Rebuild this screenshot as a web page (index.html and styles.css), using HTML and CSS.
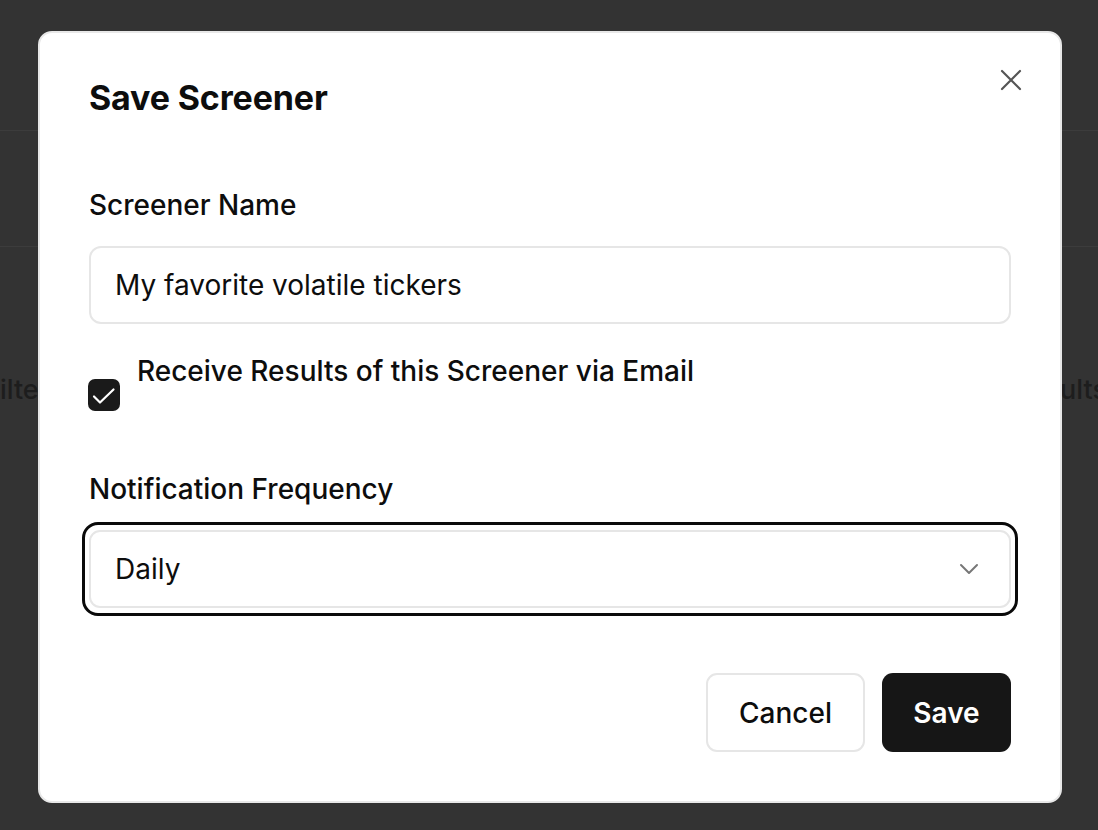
FILE: index.html
```html
<!DOCTYPE html>
<html>
<head>
<meta charset="utf-8">
<link rel="stylesheet" href="styles.css">
</head>
<body>
<div class="page">
  <div class="page-header"></div>
  <div class="page-toolbar"></div>
  <div class="page-row">
    <span class="page-left">Filters</span>
    <span class="page-right">Results</span>
  </div>
</div>
<div class="overlay">
  <div class="modal">
    <div class="modal-head">
      <h2 class="modal-title">Save Screener</h2>
      <button class="close-btn" aria-label="Close">
        <svg width="22" height="22" viewBox="0 0 22 22"><path d="M2 2 L20 20 M20 2 L2 20" stroke="#555" stroke-width="2.2" stroke-linecap="round" fill="none"/></svg>
      </button>
    </div>
    <label class="field-label name-label">Screener Name</label>
    <div class="text-input">My favorite volatile tickers</div>
    <div class="check-row">
      <span class="checkbox">
        <svg width="32" height="32" viewBox="0 0 32 32"><path d="M6 17.5 L12 23.5 L25.5 10.5" stroke="#fff" stroke-width="2.2" stroke-linecap="round" stroke-linejoin="round" fill="none"/></svg>
      </span>
      <span class="check-label">Receive Results of this Screener via Email</span>
    </div>
    <label class="field-label freq-label">Notification Frequency</label>
    <div class="select-ring">
      <div class="select">
        <span>Daily</span>
        <svg width="20" height="12" viewBox="0 0 20 12"><path d="M2 2 L10 10 L18 2" stroke="#777" stroke-width="2" stroke-linecap="round" stroke-linejoin="round" fill="none"/></svg>
      </div>
    </div>
    <div class="actions">
      <button class="btn btn-cancel">Cancel</button>
      <button class="btn btn-save">Save</button>
    </div>
  </div>
</div>
</body>
</html>
```
FILE: styles.css
```css
* { box-sizing: border-box; }
html, body { margin: 0; padding: 0; }
body {
  width: 1098px;
  height: 830px;
  background: #333333;
  font-family: Inter, "Noto Sans", sans-serif;
  color: #111;
  overflow: hidden;
  position: relative;
}
.page { height: 830px; }
.page-header { height: 131px; border-bottom: 1px solid #3c3c3c; }
.page-toolbar { height: 116px; border-bottom: 1px solid #3c3c3c; }
.page-row {
  display: flex;
  justify-content: space-between;
  margin-top: 126px;
  font-size: 27px;
  color: #1d1d1d;
  font-weight: 500;
}
.page-left { margin-left: -16px; }
.page-right { margin-right: -9px; }

.overlay {
  position: absolute;
  inset: 0;
}
.modal {
  position: absolute;
  left: 38px;
  top: 31px;
  width: 1024px;
  height: 772px;
  background: #fff;
  border: 2px solid #e8e8e8;
  border-radius: 14px;
  padding: 0 49px;
  display: flex;
  flex-direction: column;
}
.modal-head {
  display: flex;
  justify-content: space-between;
  align-items: flex-start;
  padding-top: 41px;
}
.modal-title {
  margin: 0;
  font-size: 34px;
  font-weight: 700;
  letter-spacing: -0.15px;
  line-height: 48px;
  color: #0d0d0d;
}
.close-btn {
  background: none;
  border: none;
  padding: 0;
  margin-top: -5px;
  margin-right: -11px;
  width: 22px;
  height: 22px;
  display: flex;
}
.field-label {
  font-size: 28px;
  font-weight: 500;
  line-height: 36px;
  color: #0d0d0d;
}
.name-label { margin-top: 65px; }
.text-input {
  margin-top: 23px;
  height: 78px;
  border: 2px solid #e6e6e6;
  border-radius: 12px;
  padding: 0 24px;
  display: flex;
  align-items: center;
  font-size: 28px;
  color: #0d0d0d;
}
.check-row {
  display: flex;
  align-items: flex-start;
  margin-top: 29px;
  height: 84px;
}
.checkbox {
  width: 32px;
  height: 32px;
  border-radius: 7px;
  background: #1a1a1a;
  display: flex;
  margin-top: 26px;
  margin-left: -1px;
  flex: none;
}
.check-label {
  font-size: 28px;
  font-weight: 500;
  line-height: 36px;
  margin-left: 17px;
  color: #0d0d0d;
}
.freq-label { margin-top: 34px; }
.select-ring {
  margin: 15px -7px 0;
  border: 3px solid #0a0a0a;
  border-radius: 16px;
  padding: 5px 4px;
}
.select {
  height: 78px;
  border: 2px solid #e6e6e6;
  border-radius: 11px;
  padding: 0 30px 0 24px;
  display: flex;
  align-items: center;
  justify-content: space-between;
  font-size: 28px;
  color: #0d0d0d;
}
.actions {
  display: flex;
  justify-content: flex-end;
  gap: 17px;
  margin-top: 57px;
}
.btn {
  height: 79px;
  border-radius: 11px;
  font-family: inherit;
  font-size: 28px;
  font-weight: 500;
  padding: 0;
  display: flex;
  align-items: center;
  justify-content: center;
}
.btn-cancel {
  width: 159px;
  background: #fff;
  border: 2px solid #e6e6e6;
  color: #0d0d0d;
}
.btn-save {
  width: 129px;
  background: #161616;
  border: none;
  color: #fff;
  font-weight: 600;
}
```
